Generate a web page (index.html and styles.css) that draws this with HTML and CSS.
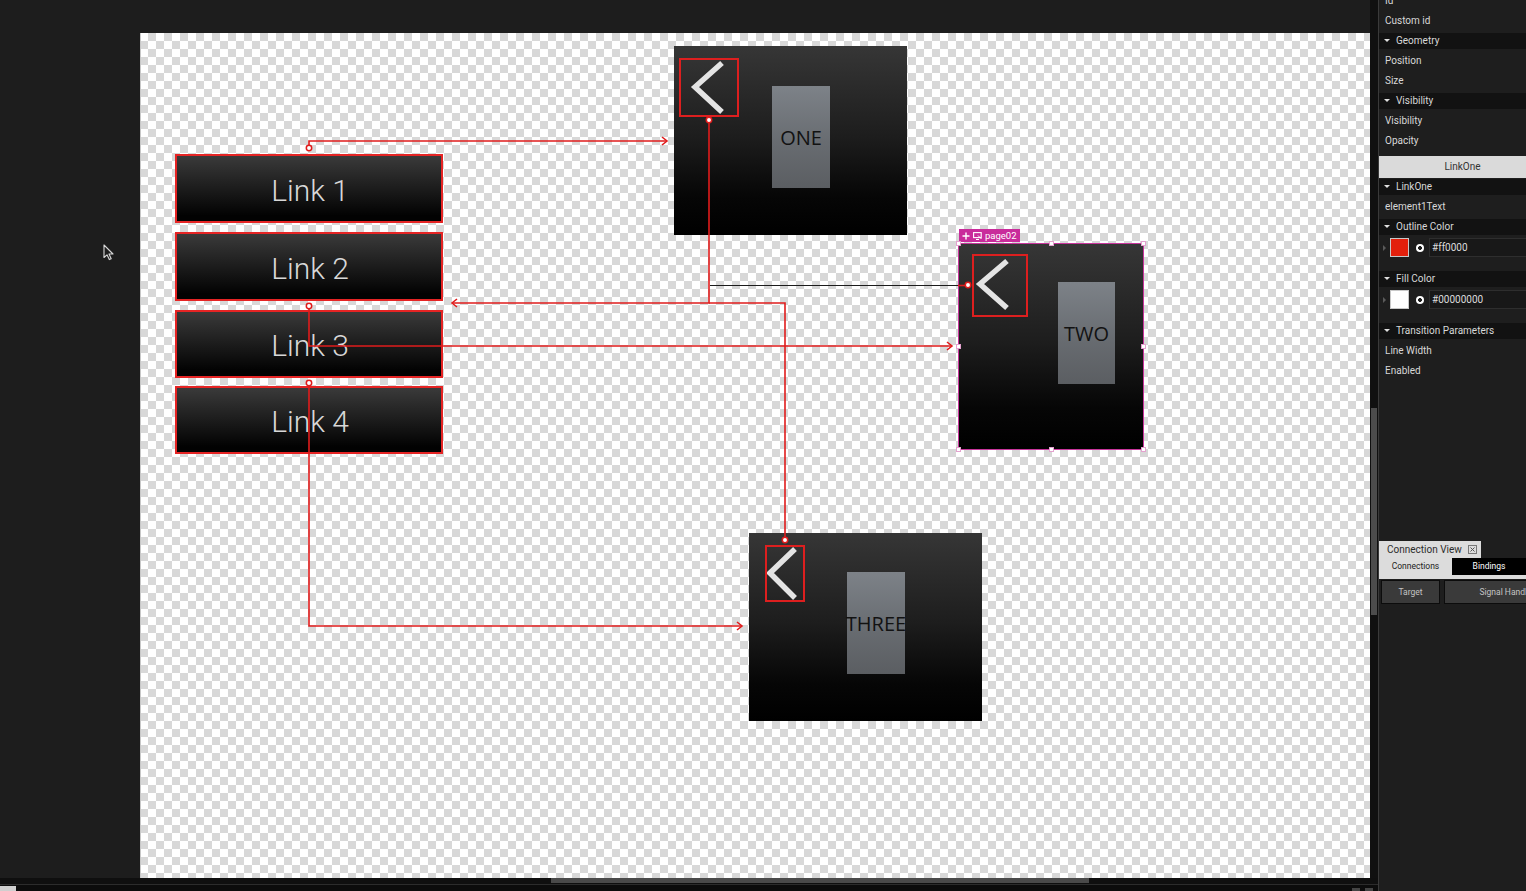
FILE: index.html
```html
<!DOCTYPE html>
<html>
<head>
<meta charset="utf-8">
<title>Editor</title>
<link rel="stylesheet" href="styles.css">
</head>
<body>
<div class="app">
  <div class="workspace">
    <div class="main-row">
      <div class="stage">
        <svg class="cursor" width="12" height="18" viewBox="0 0 12 18"><path d="M1 1 L1 13.5 L4 10.8 L6.3 15.6 L8.2 14.8 L6 10 L10 10 Z" fill="#1d1d1d" stroke="#d8d8d8" stroke-width="1.1" stroke-linejoin="round"/></svg>
        <div class="canvas">
          <div class="links">
            <div class="link">Link 1</div>
            <div class="link">Link 2</div>
            <div class="link">Link 3</div>
            <div class="link">Link 4</div>
          </div>

          <div class="page page-one">
            <div class="back back-one">
              <svg width="56" height="55" viewBox="0 0 56 55"><polyline points="41,3 14,27 41,52" fill="none" stroke="#e4e4e4" stroke-width="5.5"/></svg>
            </div>
            <div class="tile tile-one">ONE</div>
          </div>

          <div class="page page-two">
            <div class="page-tag">
              <svg width="8" height="8" viewBox="0 0 8 8"><path d="M4 0.5V7.5M0.5 4H7.5" stroke="#fff" stroke-width="1.4"/></svg>
              <svg width="9" height="8" viewBox="0 0 9 8"><rect x="0.6" y="0.6" width="7.6" height="5" fill="none" stroke="#fff" stroke-width="1.1"/><path d="M3 7.5H6" stroke="#fff" stroke-width="1"/><path d="M5 3.5L8.5 7" stroke="#fff" stroke-width="1"/></svg>
              <span>page02</span>
            </div>
            <div class="back back-two">
              <svg width="52" height="59" viewBox="0 0 52 59"><polyline points="33,5 6,28 33,52" fill="none" stroke="#e4e4e4" stroke-width="5.5"/></svg>
            </div>
            <div class="tile tile-two">TWO</div>
            <span class="handle h-tl"></span><span class="handle h-tm"></span><span class="handle h-tr"></span>
            <span class="handle h-ml"></span><span class="handle h-mr"></span>
            <span class="handle h-bl"></span><span class="handle h-bm"></span><span class="handle h-br"></span>
          </div>

          <div class="page page-three">
            <div class="back back-three">
              <svg width="36" height="53" viewBox="0 0 36 53"><polyline points="28,2 3,26 28,51" fill="none" stroke="#e4e4e4" stroke-width="5.5"/></svg>
            </div>
            <div class="tile tile-three">THREE</div>
          </div>

          <svg class="wires" width="1230" height="845" viewBox="0 0 1230 845">
            <g fill="none" stroke="#e01c1c" stroke-width="1.6">
              <path d="M169 112 V108 H527"/>
              <polyline points="522,104 527,108 522,112"/>
              <path d="M569 90 V270 H313"/>
              <polyline points="317,266 312,270 317,274"/>
              <path d="M569 270 H645 V504"/>
              <path d="M169 276 V313 H812"/>
              <polyline points="807,309 812,313 807,317"/>
              <path d="M169 353 V593 H602"/>
              <polyline points="597,589 602,593 597,597"/>
              <path d="M818 252.5 H826"/>
            </g>
            <path d="M570 252.5 H818" stroke="#1c1c1c" stroke-width="1" fill="none"/>
            <g fill="#fff" stroke="#e01c1c" stroke-width="1.5">
              <circle cx="169" cy="115" r="2.7"/>
              <circle cx="569" cy="87" r="2.7"/>
              <circle cx="645" cy="507" r="2.7"/>
              <circle cx="828" cy="252" r="2.7"/>
              <circle cx="169" cy="273" r="2.7"/>
              <circle cx="169" cy="350" r="2.7"/>
            </g>
          </svg>
        </div>
      </div>
      <div class="vscroll"><div class="vthumb"></div></div>
    </div>
    <div class="hscroll"><div class="hthumb"></div></div>
    <div class="status"><span class="status-box"></span><span class="status-spacer"></span><span class="status-mini"></span><span class="status-mini"></span></div>
  </div>

  <aside class="panel">
    <div class="prow prow-first">Id</div>
    <div class="prow">Custom id</div>
    <div class="phead">Geometry</div>
    <div class="prow">Position</div>
    <div class="prow">Size</div>
    <div class="phead">Visibility</div>
    <div class="prow">Visibility</div>
    <div class="prow">Opacity</div>
    <div class="pbutton">LinkOne</div>
    <div class="phead phead-tight">LinkOne</div>
    <div class="prow">element1Text</div>
    <div class="phead">Outline Color</div>
    <div class="color-row">
      <span class="caret"></span>
      <span class="swatch swatch-red"></span>
      <span class="radio"></span>
      <span class="cinput">#ff0000</span>
    </div>
    <div class="phead">Fill Color</div>
    <div class="color-row">
      <span class="caret"></span>
      <span class="swatch swatch-white"></span>
      <span class="radio"></span>
      <span class="cinput">#00000000</span>
    </div>
    <div class="phead">Transition Parameters</div>
    <div class="prow">Line Width</div>
    <div class="prow">Enabled</div>

    <div class="cv">
      <div class="cv-tabbar">
        <div class="cv-tab">Connection View
          <svg class="cv-close" width="9" height="9" viewBox="0 0 9 9"><rect x="0.5" y="0.5" width="8" height="8" fill="none" stroke="#777"/><path d="M2.5 2.5L6.5 6.5M6.5 2.5L2.5 6.5" stroke="#555" stroke-width="1"/></svg>
        </div>
      </div>
      <div class="cv-body">
        <div class="cv-sub cv-sub-light">Connections</div>
        <div class="cv-sub cv-sub-dark">Bindings</div>
      </div>
      <div class="cv-buttons">
        <div class="cv-btn cv-btn-target">Target</div>
        <div class="cv-btn cv-btn-signal">Signal Handler</div>
      </div>
    </div>
  </aside>
</div>
</body>
</html>
```
FILE: styles.css
```css
* { box-sizing: border-box; }
html, body { margin: 0; padding: 0; }
body {
  width: 1526px;
  height: 891px;
  overflow: hidden;
  background: #1d1d1d;
  font-family: Roboto, "Open Sans", sans-serif;
}
.app {
  display: grid;
  grid-template-columns: 1378px 148px;
  height: 891px;
}
.workspace {
  display: grid;
  grid-template-rows: 878px 7px 6px;
}
.main-row {
  display: grid;
  grid-template-columns: 1370px 8px;
}
.stage {
  position: relative;
  background: #1d1d1d;
  padding: 33px 0 0 140px;
}
.cursor {
  position: absolute;
  left: 103px;
  top: 244px;
}
.canvas {
  position: relative;
  width: 1230px;
  height: 845px;
  background-color: #ffffff;
  background-image: conic-gradient(#d8d8d8 25%, transparent 0 50%, #d8d8d8 0 75%, transparent 0);
  background-size: 16px 16px;
  box-shadow: inset 1px 0 0 #c8c8c8;
}
.links {
  position: absolute;
  left: 35px;
  top: 121px;
  display: flex;
  flex-direction: column;
  gap: 9px;
}
.link {
  width: 268px;
  height: 69px;
  border: 2px solid #e52424;
  background: linear-gradient(180deg, #3a3a3a 0%, #1c1c1c 50%, #020202 92%);
  color: #d8d8d8;
  font-family: Roboto, sans-serif;
  font-weight: 300;
  font-size: 30px;
  display: flex;
  align-items: center;
  justify-content: center;
  padding-top: 3px;
  padding-left: 2px;
}
.link:nth-child(3), .link:nth-child(4) { height: 68px; }
.link:nth-child(4) { margin-top: -1px; }

.page {
  position: absolute;
  background: linear-gradient(180deg, #363636 0%, #1d1d1d 48%, #060606 80%, #000 100%);
}
.page-one { left: 534px; top: 13px; width: 233px; height: 189px; }
.page-two { left: 818px; top: 210px; width: 186px; height: 207px; border: 1px solid #c8359c; }
.page-three { left: 609px; top: 500px; width: 233px; height: 188px; }

.back {
  position: absolute;
  border: 2px solid #dd1f1f;
}
.back svg { display: block; }
.back-one { left: 5px; top: 12px; width: 60px; height: 59px; }
.back-two { left: 13px; top: 10px; width: 56px; height: 63px; }
.back-three { left: 16px; top: 12px; width: 40px; height: 57px; }

.tile {
  position: absolute;
  width: 58px;
  height: 102px;
  background: linear-gradient(180deg, #7d8288 0%, #686c71 55%, #5b5e62 100%);
  color: #121212;
  font-family: "Open Sans", sans-serif;
  font-size: 20px;
  display: flex;
  align-items: center;
  justify-content: center;
  white-space: nowrap;
}
.tile-one { left: 98px; top: 40px; }
.tile-two { left: 99px; top: 38px; width: 57px; }
.tile-three { left: 98px; top: 39px; }

.page-tag {
  position: absolute;
  left: 0;
  top: -15px;
  height: 13px;
  width: 61px;
  background: #c92c9b;
  color: #fff;
  font-family: Roboto, sans-serif;
  font-size: 9.5px;
  display: flex;
  align-items: center;
  gap: 3px;
  padding-left: 3px;
}
.page-tag svg { display: block; flex-shrink: 0; }

.handle {
  position: absolute;
  width: 5px;
  height: 5px;
  background: #fff;
  border: 1px solid #e4a2cf;
}
.h-tl { left: -3px; top: -3px; }
.h-tm { left: 90px; top: -3px; }
.h-tr { right: -3px; top: -3px; }
.h-ml { left: -3px; top: 100px; }
.h-mr { right: -3px; top: 100px; }
.h-bl { left: -3px; bottom: -3px; }
.h-bm { left: 90px; bottom: -3px; }
.h-br { right: -3px; bottom: -3px; }

.wires {
  position: absolute;
  left: 0;
  top: 0;
  pointer-events: none;
}

.vscroll {
  background: #101010;
  padding: 408px 1px 0 1px;
}
.vthumb {
  height: 207px;
  background: #4c4c4c;
}
.hscroll {
  background: #0f0f0f;
  padding: 0 0 1px 551px;
  border-bottom: 1px solid #2c2c2c;
}
.hthumb {
  width: 538px;
  height: 100%;
  background: #4a4a4a;
}
.status {
  background: #0c0c0c;
  display: flex;
  align-items: flex-end;
}
.status-box { width: 16px; height: 5px; background: #cfcfcf; }
.status-spacer { flex: 1; }
.status-mini { width: 8px; height: 3px; background: #444; margin-right: 5px; }

.panel {
  background: #1e1e1e;
  border-left: 1px solid #3a3a3a;
  height: 891px;
  overflow: hidden;
  display: flex;
  flex-direction: column;
  color: #d8d8d8;
  font-family: Roboto, sans-serif;
  font-size: 10px;
}
.prow {
  flex-shrink: 0;
  height: 20px;
  line-height: 20px;
  padding-left: 6px;
  white-space: nowrap;
}
.prow-first { margin-top: -9px; }
.phead {
  flex-shrink: 0;
  position: relative;
  height: 16px;
  line-height: 16px;
  margin: 2px 0;
  background: #121212;
  padding-left: 17px;
  white-space: nowrap;
}
.phead::before {
  content: "";
  position: absolute;
  left: 5px;
  top: 6px;
  border-left: 3px solid transparent;
  border-right: 3px solid transparent;
  border-top: 3px solid #e0e0e0;
}
.phead-tight { margin-top: 1px; }
.pbutton {
  flex-shrink: 0;
  margin-top: 5px;
  height: 22px;
  line-height: 22px;
  background: #dadada;
  color: #333;
  text-align: center;
  padding-left: 20px;
}
.color-row {
  flex-shrink: 0;
  height: 21px;
  margin-bottom: 11px;
  display: flex;
  align-items: center;
}
.caret {
  margin-left: 4px;
  width: 0;
  height: 0;
  border-top: 3px solid transparent;
  border-bottom: 3px solid transparent;
  border-left: 3px solid #5a5a5a;
}
.swatch {
  margin-left: 4px;
  width: 19px;
  height: 19px;
  border: 1px solid #c8c8c8;
}
.swatch-red { background: #e3200c; }
.swatch-white { background: #ffffff; }
.radio {
  margin-left: 7px;
  width: 8px;
  height: 8px;
  border-radius: 50%;
  background: radial-gradient(circle, #1e1e1e 0 1.6px, #ffffff 2.2px);
}
.cinput {
  margin-left: 5px;
  flex: 1;
  height: 19px;
  line-height: 17px;
  background: #181818;
  border: 1px solid #2e2e2e;
  border-right: none;
  padding-left: 2px;
  color: #dcdcdc;
}
.cv {
  flex-shrink: 0;
  margin-top: 160px;
  display: flex;
  flex-direction: column;
}
.cv-tabbar { display: flex; height: 17px; }
.cv-tab {
  width: 102px;
  background: #dcdcdc;
  color: #2c2c2c;
  line-height: 17px;
  padding-left: 8px;
  display: flex;
  align-items: center;
  gap: 6px;
}
.cv-close { display: block; }
.cv-body {
  display: flex;
  background: #dcdcdc;
  height: 21px;
  padding-bottom: 4px;
}
.cv-sub {
  line-height: 17px;
  font-size: 8.5px;
  text-align: center;
}
.cv-sub-light { width: 73px; color: #222; }
.cv-sub-dark { flex: 1; background: #000; color: #fff; }
.cv-buttons {
  display: flex;
  gap: 4px;
  padding: 1px 0 0 2px;
}
.cv-btn {
  flex-shrink: 0;
  height: 24px;
  line-height: 22px;
  background: #3a3a3a;
  border: 1px solid #0c0c0c;
  color: #c4c4c4;
  font-size: 8.5px;
  text-align: center;
  white-space: nowrap;
}
.cv-btn-target { width: 59px; }
.cv-btn-signal { width: 126px; }
```
